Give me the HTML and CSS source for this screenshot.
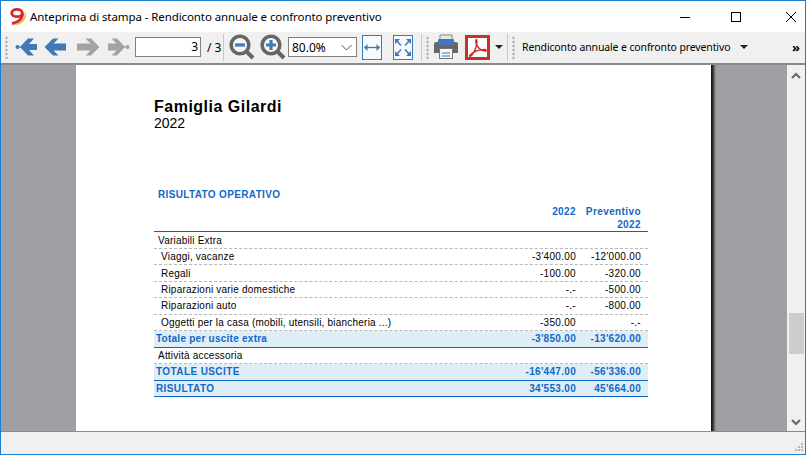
FILE: index.html
```html
<!DOCTYPE html>
<html lang="it">
<head>
<meta charset="utf-8">
<title>Anteprima di stampa</title>
<link rel="stylesheet" href="styles.css">
</head>
<body>
<div class="window">
  <header class="titlebar">
    <svg class="appicon" width="20" height="20" viewBox="0 0 20 20">
      <path d="M16.500 4.500c1.500 6-4 12.500-13.500 13.500 7.500 1.500 16-3 15-11.500-.2-.8-.8-1.500-1.500-2z" fill="#e6c24a"/>
      <path d="M14.500 6.500c.2 5-4 9-10.500 10" fill="none" stroke="#d8262c" stroke-width="2.800"/>
      <ellipse cx="9" cy="6" rx="5.300" ry="3.700" fill="none" stroke="#d8262c" stroke-width="2.800"/>
    </svg>
    <span class="title">Anteprima di stampa - Rendiconto annuale e confronto preventivo</span>
    <div class="winbtns">
      <svg width="46" height="20" viewBox="0 0 46 20"><path d="M13 10.500h10" stroke="#000"/></svg>
      <svg width="46" height="20" viewBox="0 0 46 20"><rect x="18.500" y="5.500" width="9" height="9" fill="none" stroke="#000"/></svg>
      <svg width="46" height="20" viewBox="0 0 46 20"><path d="M27 5l10 10M37 5L27 15" stroke="#000" fill="none"/></svg>
    </div>
  </header>

  <nav class="toolbar">
    <span class="grip g1"></span>
    <svg class="tool t-first" width="24" height="20" viewBox="0 0 24 20"><path d="M13 1.500L5 10l8 8.500h6L14 13h8V7h-8l5-5.500z" fill="#3e7ab5"/><path d="M2 10h4" stroke="#3e7ab5"/><circle cx="2.500" cy="10" r="2" fill="#3e7ab5"/></svg>
    <svg class="tool t-prev" width="24" height="20" viewBox="0 0 24 20"><path d="M10 1.500L1.500 10l8.500 8.500h5.500l-5-5H23v-7H10.500l5-5z" fill="#3e7ab5"/></svg>
    <svg class="tool t-next" width="24" height="20" viewBox="0 0 24 20"><path d="M15 1.500l8.500 8.500-8.500 8.500H9.500l5-5H1v-7h13.500l-5-5z" fill="#a3a3a3"/></svg>
    <svg class="tool t-last" width="24" height="20" viewBox="0 0 24 20"><path d="M9 1.500l8 8.500-8 8.500H3.500l5-5H0v-7h8.500l-5-5z" fill="#a3a3a3"/><path d="M16 10h3" stroke="#a3a3a3"/><circle cx="19.500" cy="10" r="2" fill="#a3a3a3"/></svg>
    <span class="pageinput">3</span>
    <span class="pagecount">/ 3</span>
    <span class="sep s1"></span>
    <svg class="tool t-zout" width="26" height="26" viewBox="0 0 26 26"><circle cx="11" cy="11" r="8.800" fill="#f6f8fa" stroke="#666" stroke-width="3.600"/><path d="M17 17l7 7" stroke="#666" stroke-width="4"/><path d="M6 11h10" stroke="#3e7ab5" stroke-width="3.200"/></svg>
    <svg class="tool t-zin" width="26" height="26" viewBox="0 0 26 26"><circle cx="11" cy="11" r="8.800" fill="#f6f8fa" stroke="#666" stroke-width="3.600"/><path d="M17 17l7 7" stroke="#666" stroke-width="4"/><path d="M6 11h10M11 6v10" stroke="#3e7ab5" stroke-width="3.200"/></svg>
    <div class="select"><span>80.0%</span>
      <svg width="11" height="7" viewBox="0 0 11 7"><path d="M.5 1l5 5 5-5" fill="none" stroke="#555"/></svg>
    </div>
    <span class="fitbtn fb1"><svg width="18" height="9" viewBox="0 0 18 9"><path d="M1 4.500h16" stroke="#3e7ab5" stroke-width="1.300"/><path d="M4.500 1L1 4.500 4.500 8zM13.500 1L17 4.500 13.500 8z" fill="#3e7ab5"/></svg></span>
    <span class="fitbtn fb2"><svg width="18" height="19" viewBox="0 0 18 19"><path d="M1 1h5L1 6zM17 1h-5l5 5zM1 18h5l-5-5zM17 18h-5l5-5z" fill="#3e7ab5"/><path d="M3 3l4 4.500M15 3l-4 4.500M3 16l4-4.500M15 16l-4-4.500" stroke="#3e7ab5" stroke-width="1.500"/></svg></span>
    <span class="sep s2"></span>
    <span class="grip g2"></span>
    <svg class="tool t-print" width="26" height="26" viewBox="0 0 26 26"><path d="M7 1h12v6H7z" fill="#e8e8e8" stroke="#888"/><path d="M3 8h20a2 2 0 0 1 2 2v9h-5v-4H6v4H1v-9a2 2 0 0 1 2-2z" fill="#666"/><rect x="5" y="5" width="16" height="6" rx="1" fill="#3e7ab5"/><rect x="6.500" y="14.500" width="13" height="10" fill="#f4f7fa" stroke="#777"/><path d="M9 19h8M9 22h8" stroke="#3e7ab5"/></svg>
    <svg class="tool t-pdf" width="25" height="25" viewBox="0 0 25 25"><rect x="1.500" y="1.500" width="22" height="22" fill="#fff" stroke="#c8302c" stroke-width="3"/><path d="M11.500 4.500c-1 0-1 3 0 5 2 4 5 6.500 9 6.500 1 0 .8-1.500-.5-1.500-4 0-9 1-12.500 3.500-2 1.500-3.500 3-2.500 3.300 1.500 0 4-4 6-9 .8-2.300 1.200-6.800.5-7.800z" fill="none" stroke="#c8302c" stroke-width="1.500"/></svg>
    <span class="caret c1"></span>
    <span class="sep s3"></span>
    <span class="grip g3"></span>
    <span class="doclabel">Rendiconto annuale e confronto preventivo</span>
    <span class="caret c2"></span>
    <span class="more">»</span>
  </nav>

  <main class="viewport">
    <section class="sheet">
      <h1 class="family">Famiglia Gilardi</h1>
      <p class="year">2022</p>
      <h2 class="section">RISULTATO OPERATIVO</h2>
      <div class="table">
        <div class="row head"><span></span><span class="num">2022</span><span class="num">Preventivo<br>2022</span></div>
        <div class="row group dash low"><span>Variabili Extra</span><span></span><span></span></div>
        <div class="row item dash"><span>Viaggi, vacanze</span><span class="num">-3'400.00</span><span class="num">-12'000.00</span></div>
        <div class="row item dash low"><span>Regali</span><span class="num">-100.00</span><span class="num">-320.00</span></div>
        <div class="row item dash"><span>Riparazioni varie domestiche</span><span class="num">-.-</span><span class="num">-500.00</span></div>
        <div class="row item dash"><span>Riparazioni auto</span><span class="num">-.-</span><span class="num">-800.00</span></div>
        <div class="row item dash"><span>Oggetti per la casa (mobili, utensili, biancheria ...)</span><span class="num">-350.00</span><span class="num">-.-</span></div>
        <div class="row total"><span>Totale per uscite extra</span><span class="num">-3'850.00</span><span class="num">-13'620.00</span></div>
        <div class="row group dash"><span>Attività accessoria</span><span></span><span></span></div>
        <div class="row total"><span class="wide">TOTALE USCITE</span><span class="num">-16'447.00</span><span class="num">-56'336.00</span></div>
        <div class="row total"><span class="wide">RISULTATO</span><span class="num">34'553.00</span><span class="num">45'664.00</span></div>
      </div>
    </section>
    <div class="shadow"></div>
    <div class="scrollbar">
      <svg class="chev" width="10" height="7" viewBox="0 0 10 7"><path d="M1 6l4-4 4 4" fill="none" stroke="#666" stroke-width="2"/></svg>
      <span class="thumb"></span>
      <svg class="chev" width="10" height="7" viewBox="0 0 10 7"><path d="M1 1l4 4 4-4" fill="none" stroke="#666" stroke-width="2"/></svg>
    </div>
  </main>

  <footer class="statusbar">
    <svg width="9" height="9" viewBox="0 0 9 9"><path d="M7 0h2v2H7zM4 3h2v2H4zM7 3h2v2H7zM1 6h2v2H1zM4 6h2v2H4zM7 6h2v2H7z" fill="#b5b5b5"/></svg>
  </footer>
</div>
</body>
</html>
```
FILE: styles.css
```css
* { box-sizing: border-box; }
html, body { margin: 0; padding: 0; height: 100%; overflow: hidden; }
body { background: #fff; }
.window {
  width: 806px; height: 455px;
  display: flex; flex-direction: column;
  border: 1px solid #1a7fd0;
  font-family: "Noto Sans", "Open Sans", sans-serif;
  color: #000;
}
.titlebar { height: 31px; flex: none; display: flex; align-items: center; background: #fff; padding-left: 7px; }
.appicon { flex: none; }
.title { margin-left: 2px; font-size: 11.500px; letter-spacing: -.09px; white-space: nowrap; }
.winbtns { margin-left: auto; display: flex; }
.toolbar {
  height: 33px; flex: none; display: flex; align-items: center;
  background: #f0f0f0; border-bottom: 2px solid #8a8a8a;
  padding-bottom: 1px;
}
.tool { flex: none; display: block; }
.grip {
  flex: none; width: 3px; height: 23px;
  background-image: radial-gradient(#b4b4b4 1px, transparent 1.200px);
  background-size: 3px 4px;
}
.g1 { margin-left: 4px; }
.t-first { margin-left: 7px; }
.t-prev { margin-left: 4px; }
.t-next { margin-left: 9px; }
.t-last { margin-left: 8px; }
.pageinput {
  flex: none; width: 66px; height: 20px; margin-left: 3px;
  background: #fff; border: 1px solid #808080;
  font-size: 12px; line-height: 18px; text-align: right; padding-right: 2px;
}
.pagecount { margin-left: 6px; width: 15px; font-size: 12px; white-space: nowrap; flex: none; }
.sep { flex: none; width: 1px; height: 27px; background: #c8c8c8; }
.s1 { margin-left: 1px; }
.t-zout { margin-left: 5px; }
.t-zin { margin-left: 5px; }
.select {
  flex: none; width: 69px; height: 20px; margin-left: 2px;
  background: #fff; border: 1px solid #808080;
  display: flex; align-items: center; justify-content: space-between;
  padding: 0 4px 0 3px; font-size: 12px;
}
.fitbtn {
  flex: none; width: 20px; height: 25px;
  background: #f7f9fc; border: 1px solid #3e7ab5;
  display: flex; align-items: center; justify-content: center;
}
.fitbtn svg { flex: none; }
.fb1 { margin-left: 5px; }
.fb2 { margin-left: 11px; }
.s2 { margin-left: 8px; }
.g2 { margin-left: 4px; }
.t-print { margin-left: 4px; }
.t-pdf { margin-left: 6px; }
.caret {
  flex: none; width: 0; height: 0;
  border-left: 4px solid transparent; border-right: 4px solid transparent;
  border-top: 4px solid #222;
}
.c1 { margin-left: 5px; }
.s3 { margin-left: 4px; }
.g3 { margin-left: 4px; }
.doclabel { margin-left: 7px; font-size: 10.500px; letter-spacing: -.13px; white-space: nowrap; }
.c2 { margin-left: 10px; }
.more { margin-left: auto; margin-right: 5px; font-size: 13px; font-weight: 700; line-height: 1; }

.viewport {
  flex: 1; min-height: 0; display: flex;
  background: #a0a0a4; padding-left: 75px;
  overflow: hidden;
}
.sheet {
  flex: none; width: 635px; background: #fff;
  padding: 33px 63px 0 78px;
  font-family: "Liberation Sans", Arial, sans-serif;
}
.shadow { flex: none; width: 5px; background: linear-gradient(90deg, #0c0c0c, #3c3c3c 45%, #7c7c7e 75%, #a0a0a4); }
.scrollbar {
  margin-left: auto; width: 18px; flex: none; background: #f0f0f0;
  display: flex; flex-direction: column; align-items: center;
  padding: 7px 0 5px;
}
.thumb { width: 15px; height: 41px; background: #cdcdcd; margin-top: 234px; margin-bottom: auto; }
.family { margin: 0; font-size: 16px; line-height: 18px; font-weight: 700; letter-spacing: .5px; }
.year { margin: 0; font-size: 14px; line-height: 14px; }
.section { margin: 58px 0 0 4px; font-size: 10px; line-height: 14px; font-weight: 700; color: #1068c8; letter-spacing: .35px; }
.table { margin-top: 3px; width: 494px; font-size: 10px; letter-spacing: .21px; }
.row {
  display: grid; grid-template-columns: 1fr 80px 65px;
  height: 16.500px; line-height: 16.500px; padding: 0 7px 0 4px; white-space: nowrap;
}
.low { padding-top: 1px; }
.num { text-align: right; letter-spacing: .3px; }
.head {
  height: 27px; line-height: 13px; color: #1068c8; font-weight: 700; letter-spacing: .4px;
  border-bottom: 1px solid #0b62c0;
}
.head .num { letter-spacing: .4px; }
.dash { border-bottom: 1px dashed #b8b8b8; }
.item { padding-left: 7px; }
.total {
  padding-left: 2px; background: #dfeef6; color: #1068c8; font-weight: 700;
  border-bottom: 1px solid #0b66c8; letter-spacing: .25px;
}
.total .wide { letter-spacing: .4px; }
.statusbar {
  flex: none; height: 23px; background: #f0f0f0; border-top: 1px solid #8a8a94;
  display: flex; align-items: flex-end; justify-content: flex-end; padding: 0 2px 2px 0;
}
```
